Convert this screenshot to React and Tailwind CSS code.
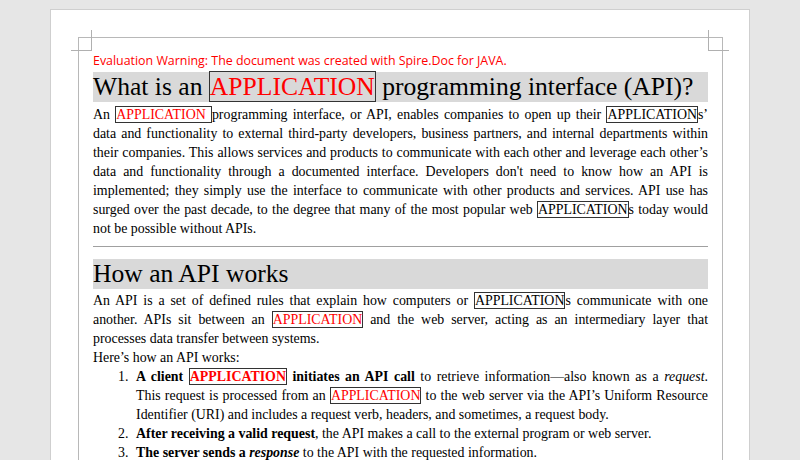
export default function App() {
  const Box = ({ children, red = true, bold = false }) => (
    <span className={`border border-[#333] ${red ? "text-[#ff0000]" : "text-black"} ${bold ? "font-bold" : ""}`}>{children}</span>
  );
  return (
    <div className="w-[800px] h-[460px] bg-[#e6e6e6] overflow-hidden" style={{ fontFamily: '"Liberation Serif", serif' }}>
      <div className="ml-[50px] mt-[9px] w-[700px] h-[460px] bg-white border border-[#cfcfcf] relative">
        <div className="absolute left-[40px] top-[20px] w-px h-[21px] bg-[#b0b0b0]" />
        <div className="absolute left-[20px] top-[40px] w-[21px] h-px bg-[#b0b0b0]" />
        <div className="absolute left-[657px] top-[20px] w-px h-[21px] bg-[#b0b0b0]" />
        <div className="absolute left-[657px] top-[40px] w-[21px] h-px bg-[#b0b0b0]" />
        <div className="ml-[27px] mt-[27px] w-[645px] h-[430px] border-l border-t border-r border-[#b8b8b8] pl-[14px] pr-[14px] pt-[14px] text-black">
          <div className="text-[12.4px] leading-[18px] text-[#ff0000]" style={{ fontFamily: '"Open Sans", sans-serif' }}>
            Evaluation Warning: The document was created with Spire.Doc for JAVA.
          </div>
          <div className="bg-[#d9d9d9] text-[25.6px] leading-[30px] h-[30px] mt-[2px]">
            What is an <span className="border border-[#333] text-[#ff0000]">APPLICATION</span> programming interface (API)?
          </div>
          <p className="text-[13.9px] leading-[19px] text-justify mt-[3px]">
            An <Box>APPLICATION </Box>programming interface, or API, enables companies to open up their <Box red={false}>APPLICATION</Box>s’ data and functionality to external third-party developers, business partners, and internal departments within their companies. This allows services and products to communicate with each other and leverage each other’s data and functionality through a documented interface. Developers don't need to know how an API is implemented; they simply use the interface to communicate with other products and services. API use has surged over the past decade, to the degree that many of the most popular web <Box red={false}>APPLICATION</Box>s today would not be possible without APIs.
          </p>
          <div className="h-px bg-[#a0a0a0] mt-[8px]" />
          <div className="bg-[#d9d9d9] text-[25.6px] leading-[30px] h-[30px] mt-[12px]">How an API works</div>
          <p className="text-[13.9px] leading-[19px] text-justify mt-[2px]">
            An API is a set of defined rules that explain how computers or <Box red={false}>APPLICATION</Box>s communicate with one another. APIs sit between an <Box>APPLICATION</Box> and the web server, acting as an intermediary layer that processes data transfer between systems.
          </p>
          <p className="text-[13.9px] leading-[19px]">Here’s how an API works:</p>
          <ol className="text-[13.9px] leading-[19px]">
            <li className="flex">
              <span className="w-[43px] pl-[25px] shrink-0">1.</span>
              <span className="text-justify flex-1"><b>A client <Box bold>APPLICATION</Box> initiates an API call</b> to retrieve information—also known as a <i>request</i>. This request is processed from an <Box>APPLICATION</Box> to the web server via the API’s Uniform Resource Identifier (URI) and includes a request verb, headers, and sometimes, a request body.</span>
            </li>
            <li className="flex">
              <span className="w-[43px] pl-[25px] shrink-0">2.</span>
              <span className="flex-1"><b>After receiving a valid request</b>, the API makes a call to the external program or web server.</span>
            </li>
            <li className="flex">
              <span className="w-[43px] pl-[25px] shrink-0">3.</span>
              <span className="flex-1"><b>The server sends a <i>response</i></b> to the API with the requested information.</span>
            </li>
            <li className="flex">
              <span className="w-[43px] pl-[25px] shrink-0">4.</span>
              <span className="flex-1"><b>The API transfers the data</b> to the initial requesting application.</span>
            </li>
          </ol>
        </div>
      </div>
    </div>
  );
}
